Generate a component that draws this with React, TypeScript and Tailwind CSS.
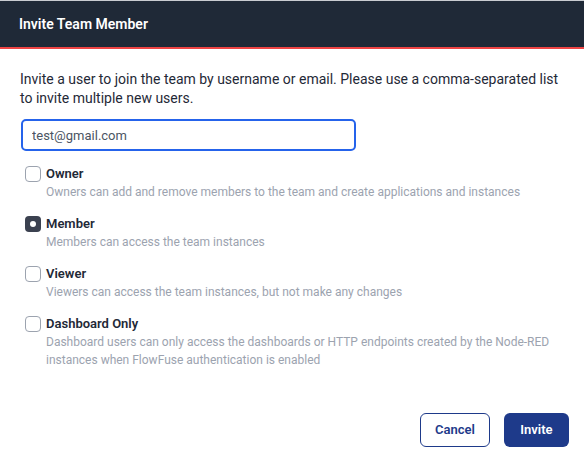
const roles = [
  {
    id: "owner",
    label: "Owner",
    description: "Owners can add and remove members to the team and create applications and instances",
  },
  {
    id: "member",
    label: "Member",
    description: "Members can access the team instances",
  },
  {
    id: "viewer",
    label: "Viewer",
    description: "Viewers can access the team instances, but not make any changes",
  },
  {
    id: "dashboard",
    label: "Dashboard Only",
    description:
      "Dashboard users can only access the dashboards or HTTP endpoints created by the Node-RED instances when FlowFuse authentication is enabled",
  },
];

function RoleOption({ label, description, checked }: { label: string; description: string; checked: boolean }) {
  return (
    <label className="flex items-start pl-[5px]">
      <span
        className={`mt-px flex h-4 w-4 shrink-0 items-center justify-center rounded-[4px] ${
          checked ? "bg-[#3b4150]" : "border-[1.5px] border-[#9ca3af] bg-white"
        }`}
      >
        {checked && <span className="h-[6px] w-[6px] rounded-full bg-white" />}
      </span>
      <span className="ml-[5px] flex flex-col">
        <span className="text-[13px] font-semibold leading-[18px] text-[#1f2937]">{label}</span>
        <span className="text-[12px] leading-[18px] text-[#9ca3af]">{description}</span>
      </span>
    </label>
  );
}

export default function App() {
  return (
    <div className="h-[465px] w-[584px] border-t border-[#c9ccd1] bg-white font-['Roboto',sans-serif]">
      <div className="flex h-[48px] items-center border-b-2 border-[#ef4444] bg-[#1f2937] px-[19px]">
        <h2 className="text-[14px] font-semibold text-white">Invite Team Member</h2>
      </div>

      <div className="px-5 pt-[21px]">
        <p className="text-[14px] leading-[19px] text-[#1f2937]">
          Invite a user to join the team by username or email. Please use a comma-separated list to invite multiple new
          users.
        </p>

        <input
          type="text"
          defaultValue="test@gmail.com"
          className="mt-[11px] ml-px h-8 w-[335px] rounded-[5px] border-2 border-[#2563eb] px-[9px] text-[13px] text-[#4b5563] outline-none"
        />

        <div className="mt-[14px] flex flex-col gap-[14px]">
          {roles.map((role) => (
            <RoleOption
              key={role.id}
              label={role.label}
              description={role.description}
              checked={role.id === "member"}
            />
          ))}
        </div>
      </div>

      <div className="mt-[44px] flex justify-end gap-[14px] pr-[15px]">
        <button className="h-[34px] w-[70px] rounded-[6px] border border-[#1e3a8a] bg-white text-[13px] font-semibold text-[#1e3a8a]">
          Cancel
        </button>
        <button className="h-[34px] w-[65px] rounded-[6px] bg-[#1e3a8a] text-[13px] font-semibold text-white">
          Invite
        </button>
      </div>
    </div>
  );
}
